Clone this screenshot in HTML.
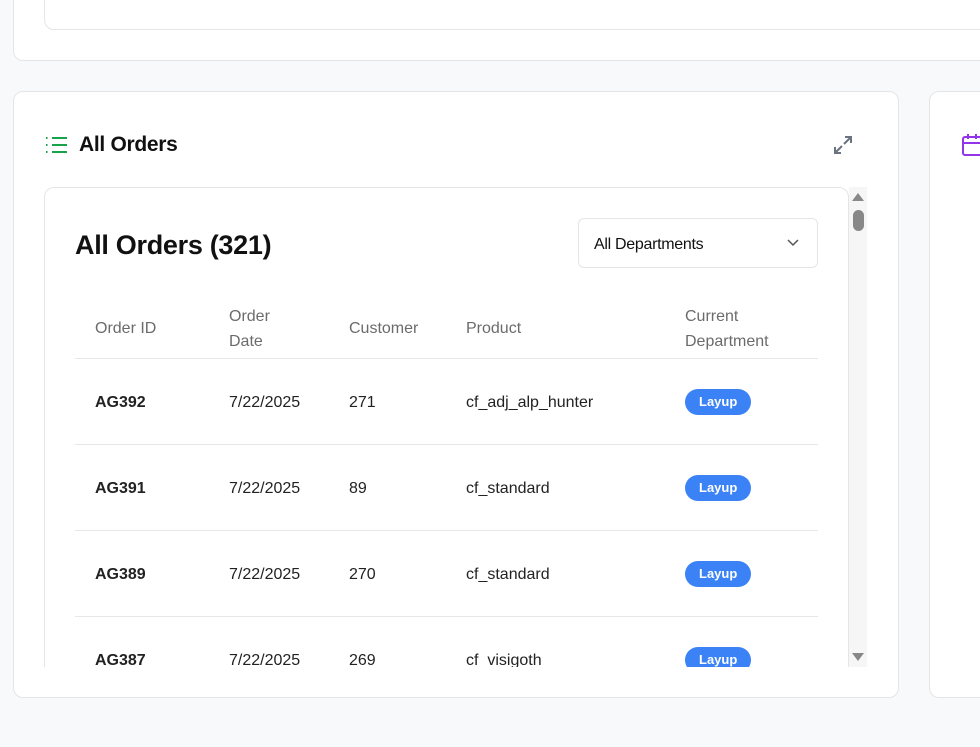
<!DOCTYPE html>
<html><head><style>
body{margin:0;width:980px;height:747px;background:#f8f9fb;font-family:"Liberation Sans",sans-serif;position:relative;overflow:hidden;color:#111}
.card{position:absolute;background:#fff;border:1px solid #e3e5e8;border-radius:10px;box-sizing:border-box}
.scroll{position:absolute;left:44px;top:187px;width:805px;height:480px;border:1px solid #e3e5e8;border-bottom:none;border-radius:10px 10px 0 0;overflow:hidden;background:#fff;box-sizing:border-box}
.th{position:absolute;color:#6b6b6b;font-size:16px;line-height:25px}
.row{position:absolute;left:30px;width:743px;height:86px;border-top:1px solid #e5e7eb}
.row span{position:absolute;top:35px;font-size:16px;color:#222}
.badge{position:absolute;top:30px;left:610px;background:#3b82f6;color:#fff;font-size:13px;font-weight:bold;border-radius:13px;padding:5px 14px;line-height:16px}
</style></head><body>
<div class="card" style="left:13px;top:-20px;width:1000px;height:81px"></div>
<div class="card" style="left:44px;top:-20px;width:1000px;height:50px"></div>
<div class="card" style="left:13px;top:91px;width:886px;height:607px"></div>
<div class="card" style="left:929px;top:91px;width:100px;height:607px"></div>
<svg style="position:absolute;left:961px;top:133px" width="22" height="24" viewBox="0 0 22 24"><rect x="2" y="4" width="20" height="18" rx="2" fill="none" stroke="#9333ea" stroke-width="2"/><line x1="2" y1="10" x2="22" y2="10" stroke="#9333ea" stroke-width="2"/><line x1="7" y1="1" x2="7" y2="6" stroke="#9333ea" stroke-width="2"/><line x1="15" y1="1" x2="15" y2="6" stroke="#9333ea" stroke-width="2"/></svg>
<svg style="position:absolute;left:45px;top:136px" width="22" height="18" viewBox="0 0 22 18"><g stroke="#16a34a" stroke-width="2"><line x1="7" y1="2" x2="22" y2="2"/><line x1="7" y1="9" x2="22" y2="9"/><line x1="7" y1="16" x2="22" y2="16"/><line x1="1" y1="2" x2="2.5" y2="2"/><line x1="1" y1="9" x2="2.5" y2="9"/><line x1="1" y1="16" x2="2.5" y2="16"/></g></svg>
<div style="position:absolute;left:79px;top:132px;font-size:21px;line-height:26px;font-weight:600;letter-spacing:-0.3px">All Orders</div>
<svg style="position:absolute;left:834px;top:136px" width="18" height="18" viewBox="0 0 18 18"><g stroke="#6b7280" stroke-width="2" fill="none"><line x1="10" y1="8" x2="17" y2="1"/><polyline points="11,1 17,1 17,7"/><line x1="8" y1="10" x2="1" y2="17"/><polyline points="1,11 1,17 7,17"/></g></svg>
<div class="scroll">
<div style="position:absolute;left:30px;top:40px;font-size:27px;line-height:34px;font-weight:600;letter-spacing:-0.3px">All Orders (321)</div>
<div style="position:absolute;left:533px;top:30px;width:238px;height:48px;border:1px solid #e3e5e8;border-radius:6px"><span style="position:absolute;left:15px;top:17px;font-size:16px;letter-spacing:-0.3px">All Departments</span><svg style="position:absolute;right:18px;top:20px" width="12" height="8" viewBox="0 0 12 8"><polyline points="1,1 6,6 11,1" fill="none" stroke="#555" stroke-width="1.5"/></svg></div>
<div class="th" style="left:50px;top:128px">Order ID</div>
<div class="th" style="left:184px;top:116px">Order<br>Date</div>
<div class="th" style="left:304px;top:128px">Customer</div>
<div class="th" style="left:421px;top:128px">Product</div>
<div class="th" style="left:640px;top:116px">Current<br>Department</div>
<div class="row" style="top:170px"><span style="left:20px;font-weight:bold">AG392</span><span style="left:154px">7/22/2025</span><span style="left:274px">271</span><span style="left:391px">cf_adj_alp_hunter</span><div class="badge">Layup</div></div>
<div class="row" style="top:256px"><span style="left:20px;font-weight:bold">AG391</span><span style="left:154px">7/22/2025</span><span style="left:274px">89</span><span style="left:391px">cf_standard</span><div class="badge">Layup</div></div>
<div class="row" style="top:342px"><span style="left:20px;font-weight:bold">AG389</span><span style="left:154px">7/22/2025</span><span style="left:274px">270</span><span style="left:391px">cf_standard</span><div class="badge">Layup</div></div>
<div class="row" style="top:428px"><span style="left:20px;font-weight:bold">AG387</span><span style="left:154px">7/22/2025</span><span style="left:274px">269</span><span style="left:391px">cf_visigoth</span><div class="badge">Layup</div></div>
</div>
<div style="position:absolute;left:849px;top:187px;width:18px;height:480px;background:#f6f6f6"></div>
<div style="position:absolute;left:852px;top:193px;width:0;height:0;border-left:6px solid transparent;border-right:6px solid transparent;border-bottom:8px solid #888"></div>
<div style="position:absolute;left:853px;top:210px;width:11px;height:21px;border-radius:6px;background:#888"></div>
<div style="position:absolute;left:852px;top:653px;width:0;height:0;border-left:6px solid transparent;border-right:6px solid transparent;border-top:8px solid #888"></div>
</body></html>
